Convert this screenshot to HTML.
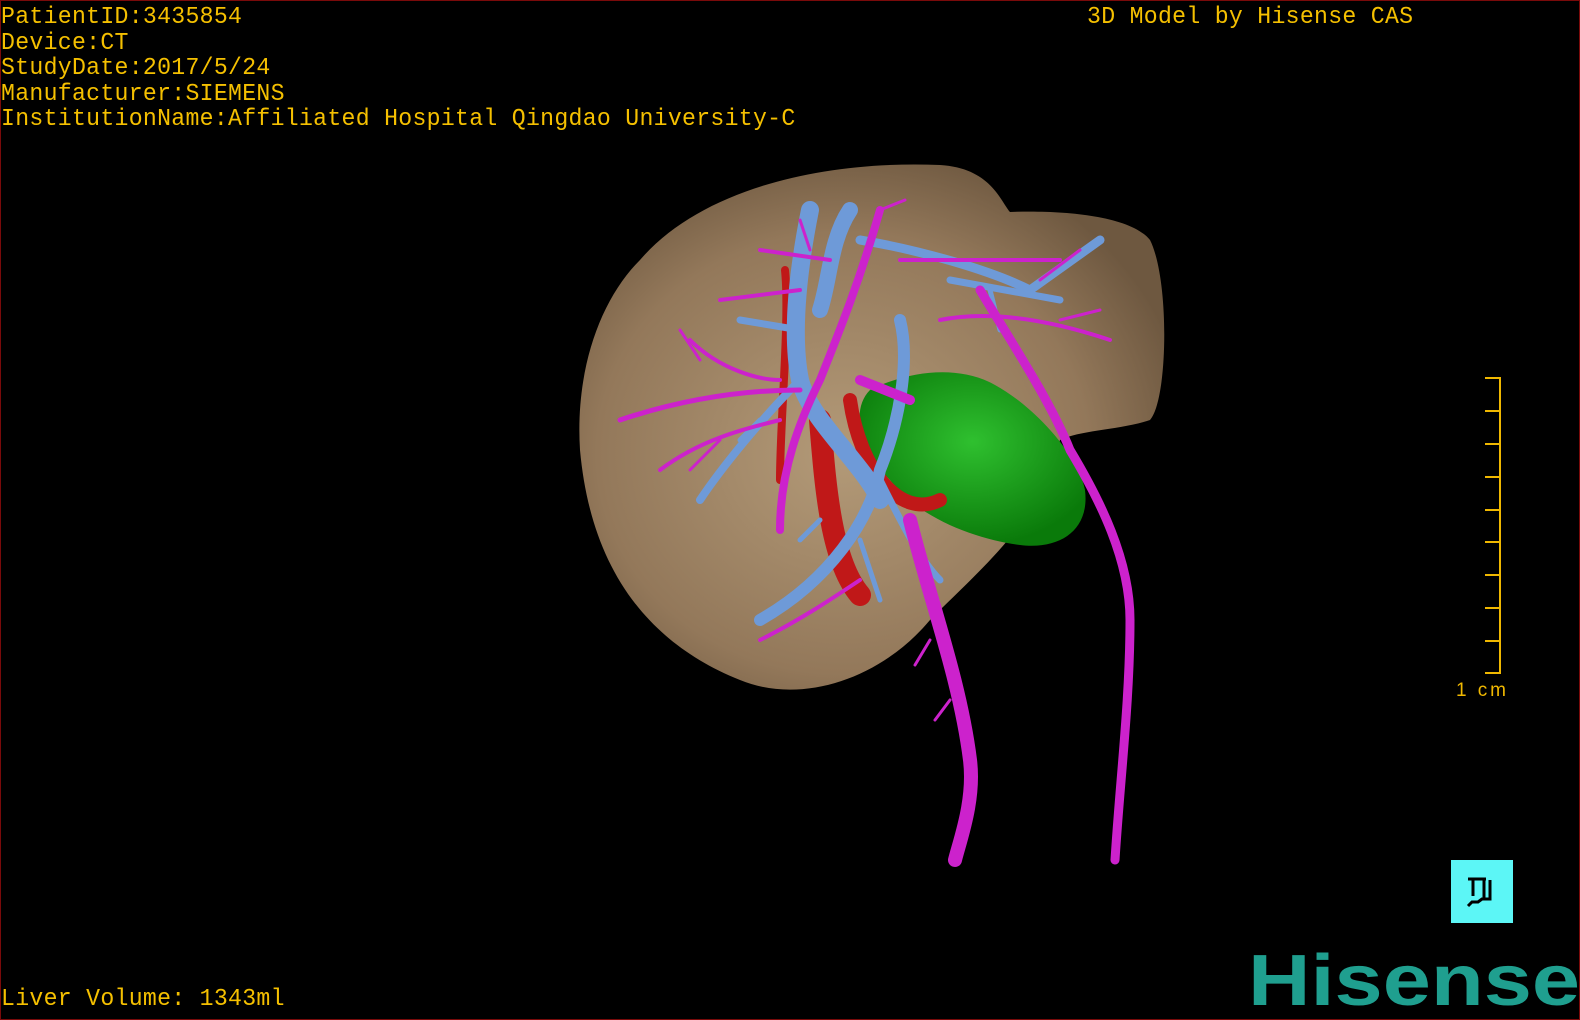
<!DOCTYPE html>
<html><head><meta charset="utf-8"><style>
html,body{margin:0;padding:0;background:#000;width:1580px;height:1020px;overflow:hidden}
#f{position:absolute;left:0;top:0;width:1578px;height:1018px;border:1px solid #7a0a0a;}
.t{position:absolute;color:#f5c000;font-family:"Liberation Mono",monospace;font-size:24px;line-height:25.5px;white-space:pre;transform-origin:0 0;transform:scaleX(0.965);letter-spacing:0.3px}
</style></head><body>
<div id="f"></div>
<svg width="1580" height="1020" style="position:absolute;left:0;top:0">
<defs>
<radialGradient id="lv" cx="0.45" cy="0.55" r="0.6"><stop offset="0" stop-color="#b39a78"/><stop offset="0.7" stop-color="#93785a"/><stop offset="1" stop-color="#6e5840"/></radialGradient>
<radialGradient id="gr" cx="0.5" cy="0.4" r="0.6"><stop offset="0" stop-color="#2fc02f"/><stop offset="1" stop-color="#0a7a0a"/></radialGradient>
</defs>
<path d="M640 260 C700 190 820 160 940 165 C990 168 1000 200 1010 212 C1060 210 1130 215 1150 240 C1170 280 1168 400 1150 420 C1120 430 1080 430 1060 440 C1040 520 990 560 930 620 C880 680 800 705 740 680 C640 640 590 560 580 450 C575 370 600 300 640 260 Z" fill="url(#lv)"/>
<path d="M870 390 C910 370 960 365 995 385 C1040 410 1080 460 1085 490 C1090 530 1060 550 1020 545 C980 540 920 520 890 480 C860 450 850 410 870 390 Z" fill="url(#gr)"/>
<g stroke="#c01818" fill="none" stroke-linecap="round">
<path d="M820 420 C825 480 830 560 860 595" stroke-width="22"/>
<path d="M850 400 C860 470 900 520 940 500" stroke-width="14"/>
<path d="M785 270 C790 320 780 420 780 480" stroke-width="8"/>
</g>
<g stroke="#6e9ad8" fill="none" stroke-linecap="round">
<path d="M810 210 C800 260 790 330 800 380 C810 420 860 460 880 500" stroke-width="18"/>
<path d="M850 210 C830 240 830 280 820 310" stroke-width="16"/>
<path d="M860 240 C920 250 990 270 1030 290 L1100 240" stroke-width="9"/>
<path d="M900 320 C910 360 900 420 880 470 C870 520 830 580 760 620" stroke-width="12"/>
<path d="M800 380 C760 420 720 470 700 500" stroke-width="8"/>
<path d="M880 480 C900 520 920 560 940 580" stroke-width="7"/>
<path d="M740 320 L800 330 M950 280 L1060 300" stroke-width="7"/>
<path d="M820 520 L800 540 M860 540 L880 600 M760 420 L740 440 M990 290 L1000 330" stroke-width="5"/>
</g>
<g stroke="#cc22cc" fill="none" stroke-linecap="round">
<path d="M910 520 C930 600 960 680 970 760 C975 800 960 840 955 860" stroke-width="14"/>
<path d="M980 290 C1010 340 1050 400 1070 450 C1100 500 1130 560 1130 620 C1130 700 1120 780 1115 860" stroke-width="9"/>
<path d="M880 210 C860 280 840 330 820 380 C800 420 780 470 780 530" stroke-width="8"/>
<path d="M620 420 C680 400 740 390 800 390" stroke-width="5"/>
<path d="M690 340 C720 370 760 380 780 380" stroke-width="4"/>
<path d="M660 470 C700 440 740 430 780 420" stroke-width="4"/>
<path d="M940 320 C990 310 1050 320 1110 340" stroke-width="4"/>
<path d="M900 260 L1060 260 M760 250 L830 260 M720 300 L800 290" stroke-width="4"/>
<path d="M760 640 C800 620 830 600 860 580" stroke-width="4"/>
<path d="M860 380 L910 400" stroke-width="10"/>
<path d="M700 360 L680 330 M720 440 L690 470 M1040 280 L1080 250 M1060 320 L1100 310 M930 640 L915 665 M950 700 L935 720 M880 210 L905 200 M810 250 L800 220" stroke-width="3"/>
</g>
<g stroke="#f0b800" stroke-width="2">
<line x1="1500" y1="377" x2="1500" y2="674"/>
<line x1="1485" y1="378" x2="1500" y2="378"/><line x1="1485" y1="411" x2="1500" y2="411"/><line x1="1485" y1="444" x2="1500" y2="444"/><line x1="1485" y1="477" x2="1500" y2="477"/><line x1="1485" y1="510" x2="1500" y2="510"/><line x1="1485" y1="542" x2="1500" y2="542"/><line x1="1485" y1="575" x2="1500" y2="575"/><line x1="1485" y1="608" x2="1500" y2="608"/><line x1="1485" y1="641" x2="1500" y2="641"/><line x1="1485" y1="673" x2="1500" y2="673"/>
</g>
<text x="1456" y="696" fill="#f0b800" font-family="Liberation Sans,sans-serif" font-size="19" textLength="50">1 cm</text>
<rect x="1451" y="860" width="62" height="63" fill="#5cf6f6"/>
<path d="M1468 879 H1486 M1473 879 V896 M1484 879 V898 M1468 906 L1472 902 H1478 L1482 899 H1490 V880" stroke="#000" stroke-width="3" fill="none"/>
<text x="1248" y="1005" fill="#1f9f8f" font-family="Liberation Sans,sans-serif" font-weight="bold" font-size="72" textLength="332" lengthAdjust="spacingAndGlyphs">Hisense</text>
</svg>
<div class="t" style="left:1px;top:5px">PatientID:3435854
Device:CT
StudyDate:2017/5/24
Manufacturer:SIEMENS
InstitutionName:Affiliated Hospital Qingdao University-C</div>
<div class="t" style="left:1087px;top:5px">3D Model by Hisense CAS</div>
<div class="t" style="left:1px;top:987px">Liver Volume: 1343ml</div>
</body></html>
